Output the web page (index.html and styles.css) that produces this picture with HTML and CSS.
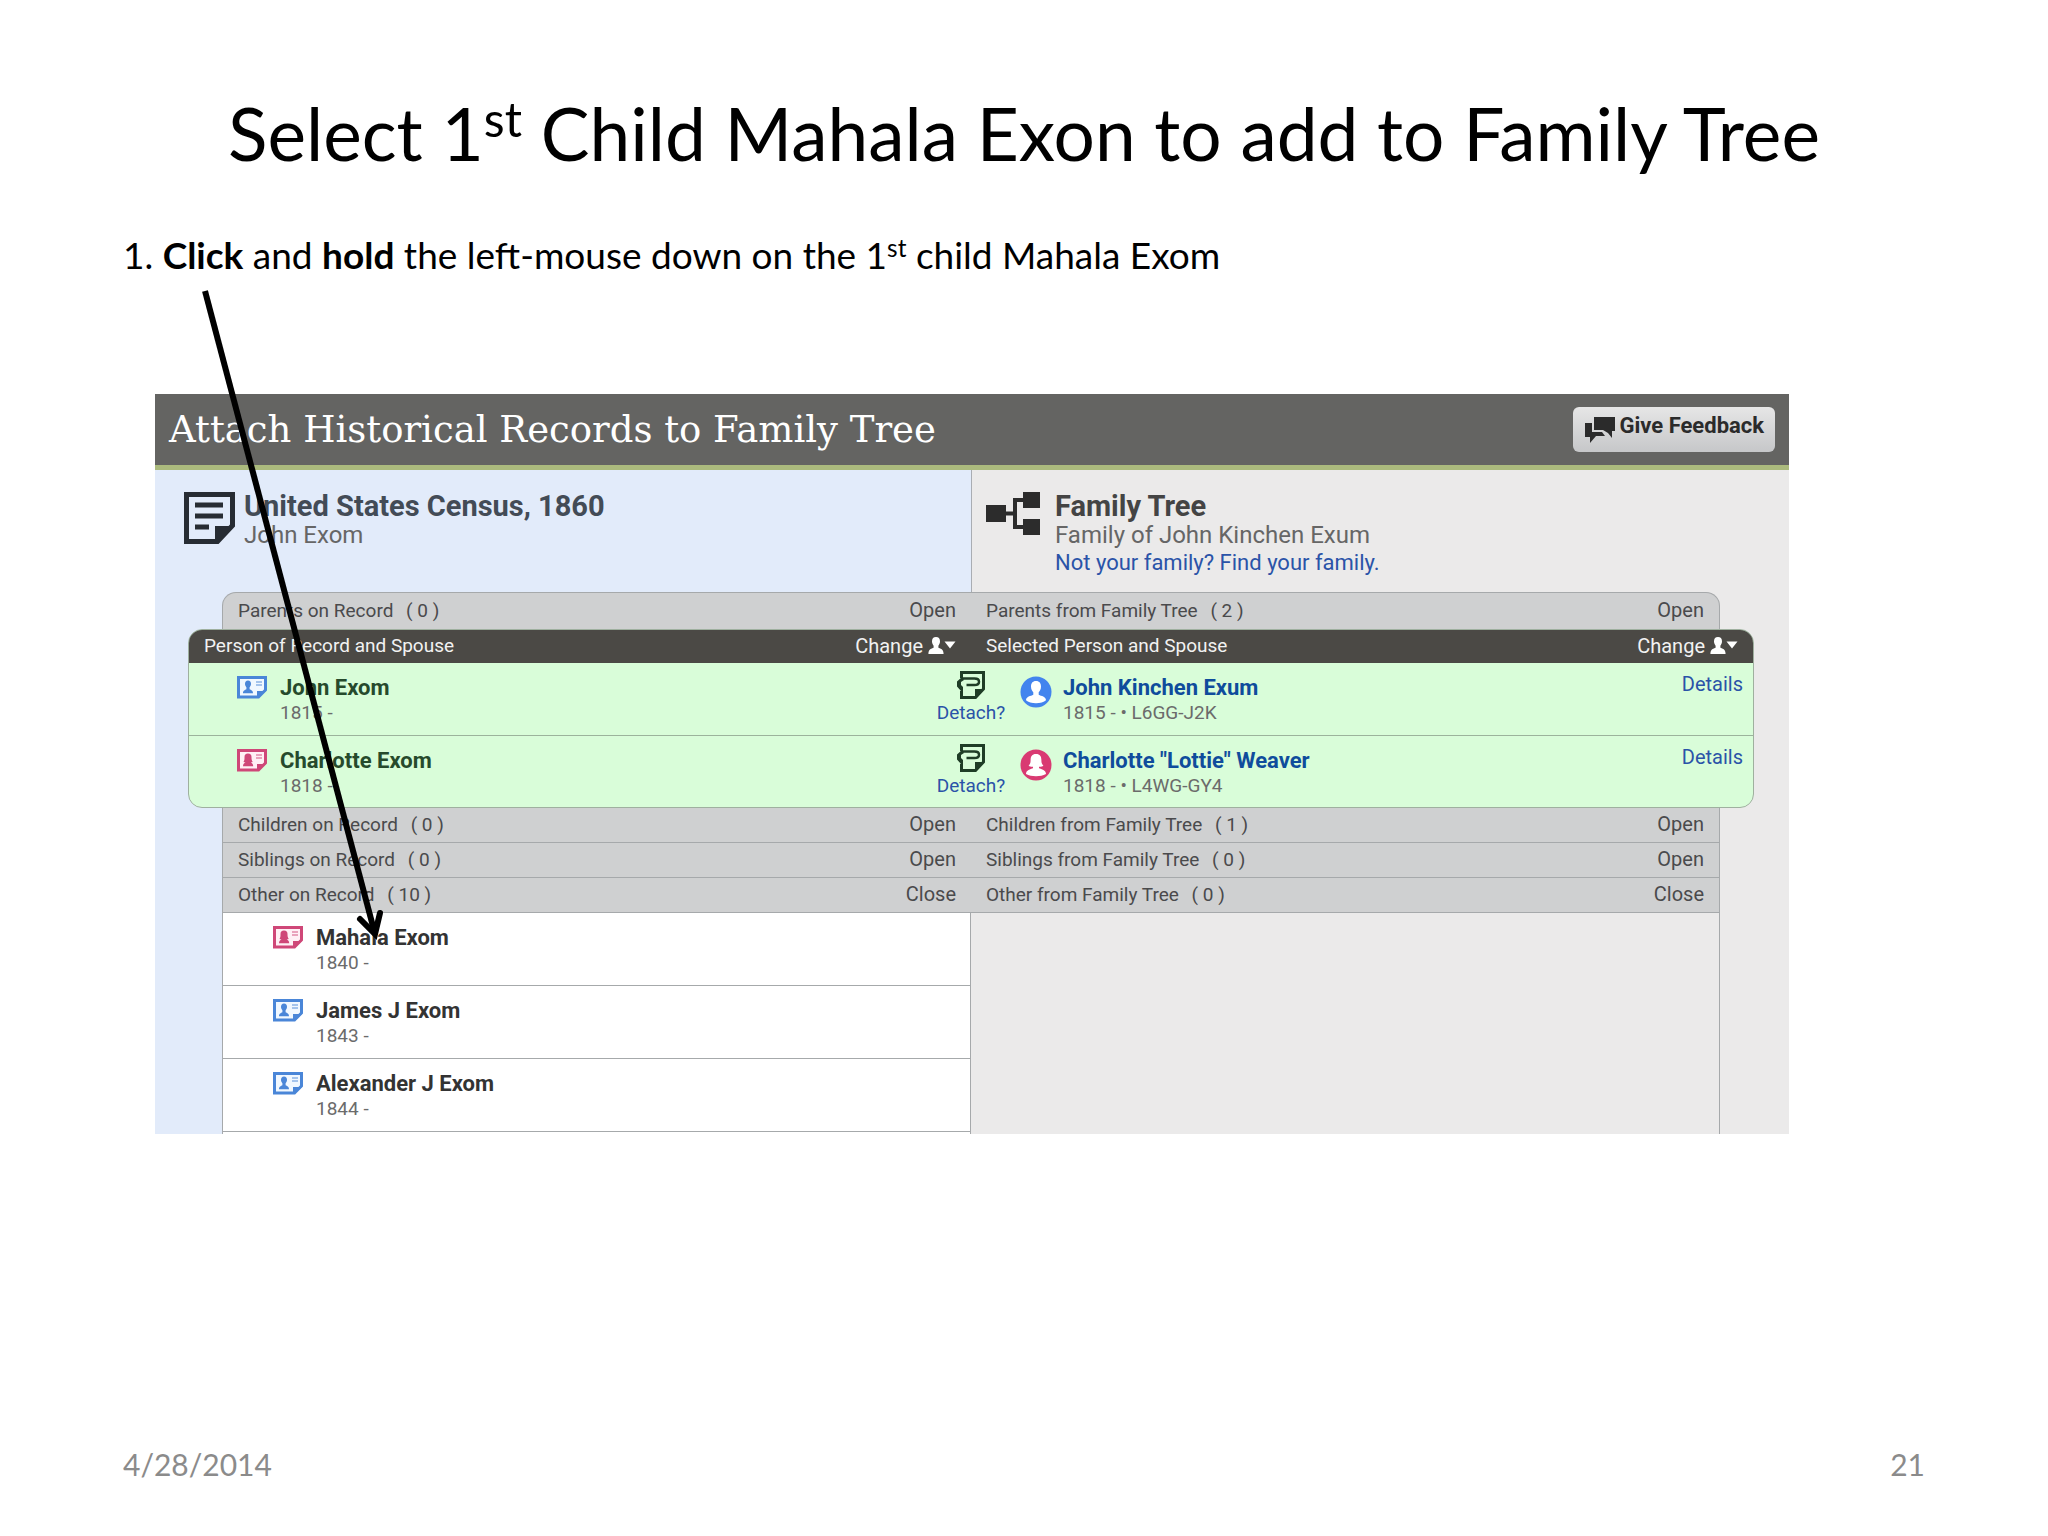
FILE: index.html
```
<!DOCTYPE html>
<html lang="en">
<head>
  <meta charset="UTF-8">
  <title>Select 1st Child Mahala Exon to add to Family Tree</title>
  <link rel="stylesheet" href="styles.css">
</head>
<body>

  <!-- Shared icons -->
  <svg class="sprite" width="0" height="0" aria-hidden="true">
    <symbol id="icon-card-m" viewBox="0 0 30 23">
      <path d="M1.5 1.5h27v12.5l-7 7h-20z" fill="#f1f8ff" stroke="currentColor" stroke-width="3"/>
      <path d="M20 22v-7h9z" fill="currentColor"/>
      <path d="M11 4.500c2 0 3 1.300 3 3.300 0 1.700-.7 2.600-1.400 3.400v2c1.500.8 3.400 1.200 3.400 4H6c0-2.800 1.900-3.200 3.400-4v-2C8.700 10.400 8 9.500 8 7.800c0-2 1-3.300 3-3.300z" fill="currentColor"/>
      <path d="M19 6h6M19 9h6" stroke="currentColor" stroke-width="1.500" opacity=".6"/>
    </symbol>
    <symbol id="icon-card-f" viewBox="0 0 30 23">
      <path d="M1.500 1.500h27v12.500l-7 7h-20z" fill="#fff0f5" stroke="currentColor" stroke-width="3"/>
      <path d="M20 22v-7h9z" fill="currentColor"/>
      <path d="M11 4.500c2.500 0 3.500 1.500 3.500 3.500 0 2 .2 3.500 1.200 5l-2 .5c1.300.6 2.500 1.400 2.500 3.700H6c0-2.300 1.200-3.100 2.500-3.700l-2-.5c1-1.500 1-3 1-5 0-2 1-3.500 3.500-3.500z" fill="currentColor"/>
      <path d="M19 6h6M19 9h6" stroke="currentColor" stroke-width="1.500" opacity=".6"/>
    </symbol>
    <symbol id="icon-change" viewBox="0 0 28 17">
      <path d="M8 0c2.600 0 4 1.500 4 4.300 0 2.100-.8 3.200-1.600 4.400v2.100c2 1 5.200 1 5.200 6.200H.4c0-5.200 3.200-5.200 5.200-6.200V8.700C4.800 7.500 4 6.400 4 4.300 4 1.500 5.400 0 8 0zM16.500 4.500h11l-5.500 7z"/>
    </symbol>
    <symbol id="icon-detach" viewBox="0 0 28 28">
      <path d="M4.500 7V1.500h22V18l-8 8.500h-14V20" fill="none" stroke="currentColor" stroke-width="3"/>
      <path d="M18 27v-9h9z" fill="currentColor"/>
      <path d="M5 7.500h12.500c3 0 4.500 1 4.500 3.200s-1.500 3.300-4.500 3.300H9.500" fill="none" stroke="currentColor" stroke-width="2.500"/>
      <path d="M5 6L0 10.500v5L4 20h2v-4l-2-2v-3l3-2z" fill="currentColor"/>
    </symbol>
  </svg>

  <main class="slide">
    <h1 class="slide-title">Select 1<sup>st</sup> Child Mahala Exon to add to Family Tree</h1>

    <p class="step">1. <b>Click</b> and <b>hold</b> the left-mouse down on the 1<sup>st</sup> child Mahala Exom</p>

    <section class="panel">
      <header class="panel-header">
        <h2>Attach Historical Records to Family Tree</h2>
        <button class="feedback-btn">
          <svg width="30" height="27" viewBox="0 0 30 27" aria-hidden="true">
            <path d="M9 0h21v14h-3v7l-4-5-5-3H9z" fill="#2b2b2b"/>
            <path d="M0 6h7v9h10l3 4H11l-6 7v-6H0z" fill="#2b2b2b"/>
          </svg>
          Give Feedback
        </button>
      </header>

      <div class="panel-body">
        <div class="sources">
          <div class="source record">
            <svg width="51" height="52" viewBox="0 0 51 52" aria-hidden="true">
              <path d="M2.500 2.500h46v31l-15 16h-31z" fill="none" stroke="#272c33" stroke-width="5"/>
              <path d="M31 51V34h18z" fill="#272c33"/>
              <path d="M11 13h28M11 24h28M11 35h14" stroke="#272c33" stroke-width="5"/>
            </svg>
            <div>
              <h3>United States Census, 1860</h3>
              <p>John Exom</p>
            </div>
          </div>
          <div class="source tree">
            <svg width="54" height="43" viewBox="0 0 54 43" aria-hidden="true">
              <path d="M0 13h20v17H0zM37 0h17v16H37zM37 27h17v16H37z" fill="#2c2c2c"/>
              <path d="M18 21.500h11M38 8h-9v27h9" fill="none" stroke="#2c2c2c" stroke-width="4"/>
            </svg>
            <div>
              <h3>Family Tree</h3>
              <p>Family of John Kinchen Exum</p>
              <a href="#find">Not your family? Find your family.</a>
            </div>
          </div>
        </div>

        <div class="bar bar-top">
          <div class="bar-half"><span>Parents on Record <i>( 0 )</i></span><button>Open</button></div>
          <div class="bar-half"><span>Parents from Family Tree <i>( 2 )</i></span><button>Open</button></div>
        </div>

        <div class="couple">
          <div class="couple-head">
            <div class="bar-half">
              <span>Person of Record and Spouse</span>
              <button>Change <svg width="28" height="17" aria-hidden="true"><use href="#icon-change"/></svg></button>
            </div>
            <div class="bar-half">
              <span>Selected Person and Spouse</span>
              <button>Change <svg width="28" height="17" aria-hidden="true"><use href="#icon-change"/></svg></button>
            </div>
          </div>

          <div class="match">
            <div class="person">
              <svg class="card male" width="30" height="23"><use href="#icon-card-m"/></svg>
              <div><strong>John Exom</strong><small>1815 -</small></div>
            </div>
            <div class="detach">
              <svg width="28" height="28"><use href="#icon-detach"/></svg>
              <a href="#detach">Detach?</a>
            </div>
            <div class="person tree-person">
              <svg width="32" height="32" viewBox="0 0 32 32" aria-hidden="true">
                <circle cx="16" cy="16" r="15.500" fill="#4384ee"/>
                <path d="M16 5c3.500 0 5 2.400 5 5.600 0 3-1.200 4.400-2.300 5.600v2.600c2.500 1.400 7.300 1.600 7.300 5.400-2 2-6 3-10 3s-8-1-10-3c0-3.800 4.800-4 7.300-5.400v-2.600C12.200 15 11 13.600 11 10.600 11 7.400 12.500 5 16 5z" fill="#fff"/>
              </svg>
              <div><a class="name" href="#john">John Kinchen Exum</a><small>1815 - • L6GG-J2K</small></div>
              <a class="details" href="#details">Details</a>
            </div>
          </div>

          <div class="match">
            <div class="person">
              <svg class="card female" width="30" height="23"><use href="#icon-card-f"/></svg>
              <div><strong>Charlotte Exom</strong><small>1818 -</small></div>
            </div>
            <div class="detach">
              <svg width="28" height="28"><use href="#icon-detach"/></svg>
              <a href="#detach">Detach?</a>
            </div>
            <div class="person tree-person">
              <svg width="32" height="32" viewBox="0 0 32 32" aria-hidden="true">
                <circle cx="16" cy="16" r="15.500" fill="#d93a72"/>
                <path d="M16 5c4 0 5.400 2.500 5.400 6 0 2.200.2 4 2 5.400-1 1.200-2.600 1.500-4.400 1.400v1.400c2.500 1 7 1.600 7 5.800-3 1.700-6 2.200-10 2.200s-7-.5-10-2.200c0-4.200 4.500-4.800 7-5.800v-1.400c-1.800.1-3.400-.2-4.400-1.400 1.800-1.400 2-3.200 2-5.400 0-3.500 1.400-6 5.400-6z" fill="#fff"/>
              </svg>
              <div><a class="name" href="#charlotte">Charlotte "Lottie" Weaver</a><small>1818 - • L4WG-GY4</small></div>
              <a class="details" href="#details">Details</a>
            </div>
          </div>
        </div>

        <div class="bar">
          <div class="bar-half"><span>Children on Record <i>( 0 )</i></span><button>Open</button></div>
          <div class="bar-half"><span>Children from Family Tree <i>( 1 )</i></span><button>Open</button></div>
        </div>
        <div class="bar">
          <div class="bar-half"><span>Siblings on Record <i>( 0 )</i></span><button>Open</button></div>
          <div class="bar-half"><span>Siblings from Family Tree <i>( 0 )</i></span><button>Open</button></div>
        </div>
        <div class="bar">
          <div class="bar-half"><span>Other on Record <i>( 10 )</i></span><button>Close</button></div>
          <div class="bar-half"><span>Other from Family Tree <i>( 0 )</i></span><button>Close</button></div>
        </div>

        <div class="others">
          <ul class="others-list">
            <li class="person">
              <svg class="card female" width="30" height="23"><use href="#icon-card-f"/></svg>
              <div><strong>Mahala Exom</strong><small>1840 -</small></div>
            </li>
            <li class="person">
              <svg class="card male" width="30" height="23"><use href="#icon-card-m"/></svg>
              <div><strong>James J Exom</strong><small>1843 -</small></div>
            </li>
            <li class="person">
              <svg class="card male" width="30" height="23"><use href="#icon-card-m"/></svg>
              <div><strong>Alexander J Exom</strong><small>1844 -</small></div>
            </li>
          </ul>
        </div>
      </div>
    </section>

    <!-- Pointer from the step to the first child -->
    <svg class="arrow" width="190" height="660" viewBox="0 0 190 660" aria-hidden="true">
      <path d="M9 3l170 643" fill="none" stroke="#000" stroke-width="6"/>
      <path d="M164 631l15 15 5-21" fill="none" stroke="#000" stroke-width="6" stroke-linecap="round"/>
    </svg>

    <footer class="slide-footer">
      <span>4/28/2014</span>
      <span>21</span>
    </footer>
  </main>

</body>
</html>
```
FILE: styles.css
```
* {
  box-sizing: border-box;
}

body {
  margin: 0;
  background: #fff;
  color: #000;
  font-family: Lato, sans-serif;
}

h1, h2, h3, p, ul {
  margin: 0;
  padding: 0;
  font-weight: normal;
}

a {
  color: #2a53a8;
  text-decoration: none;
}

button {
  border: none;
  background: none;
  padding: 0;
  font: inherit;
  color: inherit;
  cursor: pointer;
}

svg {
  flex: none;
  display: block;
}

.sprite {
  position: absolute;
}

.slide {
  position: relative;
  display: flex;
  flex-direction: column;
  min-height: 100vh;
  padding: 88px 123px 52px;
}

.slide-title {
  font-size: 73px;
  line-height: 90px;
  text-align: center;
}

sup {
  font-size: 66%;
  line-height: 0;
  vertical-align: 0.5em;
}

.step {
  margin-top: 52px;
  font-size: 37px;
  line-height: 50px;
}

/* Record panel */
.panel {
  margin: 114px 136px 0 32px;
  font-family: Roboto, sans-serif;
  font-size: 19px;
  color: #4a4a4c;
}

.panel-header {
  display: flex;
  justify-content: space-between;
  align-items: center;
  height: 76px;
  padding: 0 14px;
  background: #646462;
  border-bottom: 5px solid #abba7d;
}

.panel-header h2 {
  font-family: "DejaVu Serif", serif;
  font-size: 37px;
  color: #fff;
}

.feedback-btn {
  display: flex;
  align-items: center;
  gap: 4px;
  height: 45px;
  padding: 0 11px 8px 12px;
  border-radius: 6px;
  background: linear-gradient(#e6e6e6, #c6c7c9);
  color: #2b2b2b;
  font-size: 22px;
  font-weight: bold;
}

.feedback-btn svg {
  margin-top: 9px;
}

.panel-body {
  padding: 0 35px 0 33px;
  background: linear-gradient(to right, #e2ebfa calc(50% - 1px), #ebeaea calc(50% - 1px));
}

.sources {
  display: grid;
  grid-template-columns: 1fr 1fr;
  height: 122px;
}

.source {
  display: flex;
  align-items: flex-start;
  padding-top: 22px;
}

.source h3 {
  font-size: 29px;
  line-height: 28px;
  font-weight: bold;
  color: #444;
}

.source p {
  font-size: 24px;
  line-height: 30px;
  color: #666;
}

.source a {
  display: block;
  font-size: 22px;
  line-height: 26px;
}

.record {
  gap: 9px;
  margin-left: -4px;
}

.record h3 {
  color: #434b56;
}

.tree {
  gap: 15px;
  padding-left: 14px;
  border-left: 1px solid #a9adb3;
}

.bar {
  display: grid;
  grid-template-columns: 1fr 1fr;
  height: 35px;
  margin: 0 34px;
  background: #cfd0d1;
  border: solid #a6a9ab;
  border-width: 0 1px 1px;
}

.bar-top {
  height: 37px;
  border-width: 1px 1px 0;
  border-radius: 14px 14px 0 0;
}

.bar-half {
  display: flex;
  justify-content: space-between;
  align-items: center;
  padding: 0 15px 2px;
}

.bar-half i {
  margin-left: 8px;
  font-style: normal;
}

.bar-half button {
  font-size: 20px;
}

.couple {
  background: #d9fdd9;
  border: 1px solid #9fb09f;
  border-radius: 14px;
  overflow: hidden;
}

.couple-head {
  display: grid;
  grid-template-columns: 1fr 1fr;
  height: 33px;
  background: #4b4945;
  color: #f2f2f2;
}

.couple-head button {
  display: flex;
  align-items: center;
  gap: 5px;
  fill: #fff;
}

.match {
  display: grid;
  grid-template-columns: 1fr 72px 1fr;
  height: 72px;
}

.match + .match {
  border-top: 1px solid #9cb39c;
}

.person {
  display: flex;
  align-items: flex-start;
  gap: 13px;
  padding: 13px 10px 0 13px;
}

.tree-person {
  gap: 11px;
}

.match .person:first-child {
  padding-left: 48px;
}

.person strong,
.person .name {
  display: block;
  font-size: 22px;
  line-height: 24px;
  font-weight: bold;
}

.person strong {
  color: #333;
}

.match strong {
  color: #264a2c;
}

.person .name {
  color: #0f4c9c;
}

.person small {
  display: block;
  font-size: 19px;
  line-height: 26px;
  color: #6b6b6b;
}

.person .details {
  margin-left: auto;
  margin-top: -4px;
  font-size: 20px;
}

.male {
  color: #4a86d8;
}

.female {
  color: #cf4778;
}

.detach {
  display: flex;
  flex-direction: column;
  align-items: center;
  gap: 2px;
  padding-top: 8px;
  color: #1f3d26;
}

.others {
  display: grid;
  grid-template-columns: 1fr 1fr;
  margin: 0 34px;
  border: solid #a6a9ab;
  border-width: 0 1px;
}

.others-list {
  list-style: none;
  padding-bottom: 2px;
  background: #fff;
  border-right: 1px solid #a6a9ab;
}

.others-list .person {
  height: 73px;
  padding-left: 50px;
  border-bottom: 1px solid #a6a9ab;
}

/* Arrow lies over the panel */
.arrow {
  position: absolute;
  left: 196px;
  top: 288px;
}

.slide-footer {
  display: flex;
  justify-content: space-between;
  margin-top: auto;
  font-size: 30px;
  line-height: 40px;
  color: #8b8b8b;
}
```
